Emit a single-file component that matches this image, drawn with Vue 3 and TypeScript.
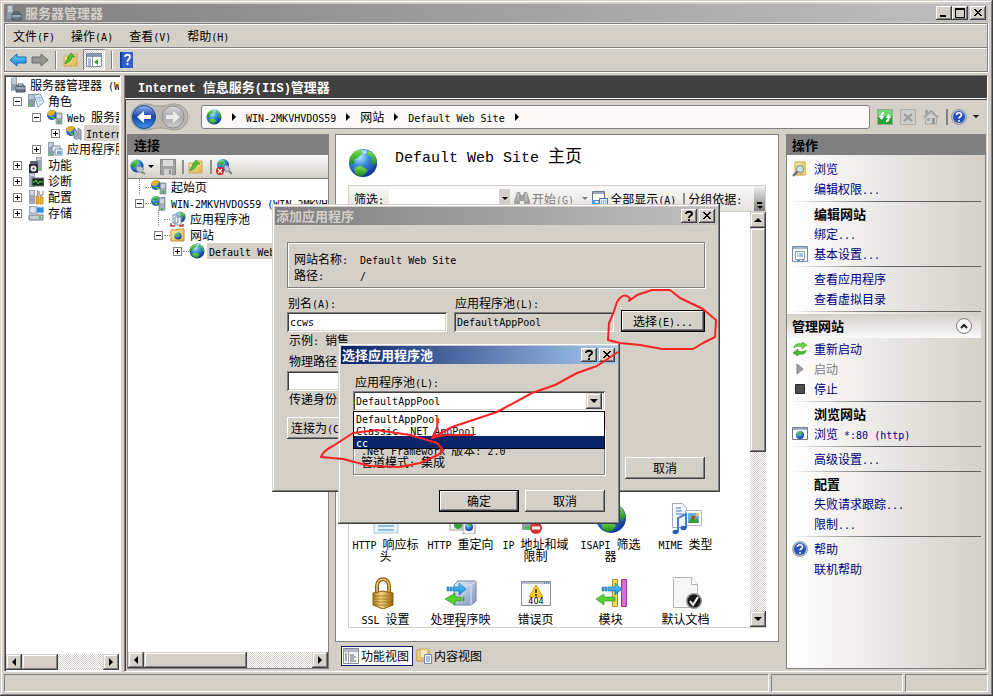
<script setup lang="ts">
import { h, ref } from 'vue'
import type { FunctionalComponent } from 'vue'

// Sets half-width runs in a mono face and leaves CJK runs in the page face.
const T: FunctionalComponent<{ s: string }> = (props) =>
  h('span', { class: 'tx' }, props.s.split(/([\x20-\x7e]+)/).filter(Boolean).map((part) =>
    /^[\x20-\x7e]/.test(part) ? h('span', { class: 'en' }, part) : part))
T.props = ['s']

const Ico: FunctionalComponent<{ n: string; size?: number }> = (props) =>
  h('svg', { class: 'ico', width: props.size ?? 16, height: props.size ?? 16, 'aria-hidden': 'true' },
    [h('use', { href: '#i-' + props.n })])
Ico.props = ['n', 'size']

interface Node { label: string; icon: string; depth: number; box?: string; on?: boolean }
const nav: Node[] = [
  { label: '服务器管理器 (W', icon: 'srvbox', depth: 0 },
  { label: '角色', icon: 'roles', depth: 1, box: '-' },
  { label: 'Web 服务器', icon: 'websrv', depth: 2, box: '-' },
  { label: 'Intern', icon: 'iis', depth: 3, box: '+', on: true },
  { label: '应用程序服', icon: 'appsrv', depth: 2, box: '+' },
  { label: '功能', icon: 'feature', depth: 1, box: '+' },
  { label: '诊断', icon: 'diag', depth: 1, box: '+' },
  { label: '配置', icon: 'conf', depth: 1, box: '+' },
  { label: '存储', icon: 'store', depth: 1, box: '+' },
]
const sites: Node[] = [
  { label: '起始页', icon: 'websrv', depth: 1, box: '.' },
  { label: 'WIN-2MKVHVDOS59 (WIN-2MKVHVDOS59', icon: 'iissrv', depth: 1, box: '-' },
  { label: '应用程序池', icon: 'pool', depth: 2, box: '.' },
  { label: '网站', icon: 'sitefolder', depth: 2, box: '-' },
  { label: 'Default Web Site', icon: 'globe', depth: 3, box: '+', on: true },
]
const features = [
  { icon: 'header', lines: ['HTTP 响应标', '头'] },
  { icon: 'redirect', lines: ['HTTP 重定向'] },
  { icon: 'iplimit', lines: ['IP 地址和域', '限制'] },
  { icon: 'globe', lines: ['ISAPI 筛选', '器'] },
  { icon: 'mime', lines: ['MIME 类型'] },
  { icon: 'lock', lines: ['SSL 设置'] },
  { icon: 'handler', lines: ['处理程序映', '射'] },
  { icon: 'err404', lines: ['错误页'] },
  { icon: 'module', lines: ['模块'] },
  { icon: 'defdoc', lines: ['默认文档'] },
]
interface Act { t: string; k: 'link' | 'head' | 'sep' | 'off' | 'section'; icon?: string }
const actions: Act[] = [
  { t: '浏览', k: 'link', icon: 'browse' },
  { t: '编辑权限...', k: 'link' },
  { t: '', k: 'sep' },
  { t: '编辑网站', k: 'head' },
  { t: '绑定...', k: 'link' },
  { t: '基本设置...', k: 'link', icon: 'settings' },
  { t: '', k: 'sep' },
  { t: '查看应用程序', k: 'link' },
  { t: '查看虚拟目录', k: 'link' },
  { t: '', k: 'sep' },
  { t: '管理网站', k: 'section' },
  { t: '重新启动', k: 'link', icon: 'restart' },
  { t: '启动', k: 'off', icon: 'play' },
  { t: '停止', k: 'link', icon: 'stop' },
  { t: '', k: 'sep' },
  { t: '浏览网站', k: 'head' },
  { t: '浏览 *:80 (http)', k: 'link', icon: 'webwin' },
  { t: '', k: 'sep' },
  { t: '高级设置...', k: 'link' },
  { t: '', k: 'sep' },
  { t: '配置', k: 'head' },
  { t: '失败请求跟踪...', k: 'link' },
  { t: '限制...', k: 'link' },
  { t: '', k: 'sep' },
  { t: '帮助', k: 'link', icon: 'help' },
  { t: '联机帮助', k: 'link' },
]
const menus = ['文件(F)', '操作(A)', '查看(V)', '帮助(H)']
const pools = ['DefaultAppPool', 'Classic .NET AppPool', 'cc']
const hovered = ref('cc')
const pool = ref('DefaultAppPool')
const alias = ref('ccws')
const path = ref('')
</script>

<template>
  <svg class="defs" width="0" height="0" aria-hidden="true">
    <defs>
      <radialGradient id="g-globe" cx=".38" cy=".28" r=".8">
        <stop offset="0" stop-color="#b8ecff" /><stop offset=".4" stop-color="#3c8fe0" /><stop offset="1" stop-color="#0a1f8c" />
      </radialGradient>
      <linearGradient id="g-land" x1="0" y1="0" x2="0" y2="1">
        <stop offset="0" stop-color="#7ee04a" /><stop offset="1" stop-color="#128a1e" />
      </linearGradient>
      <linearGradient id="g-blue" x1="0" y1="0" x2="0" y2="1">
        <stop offset="0" stop-color="#8fb4ec" /><stop offset=".5" stop-color="#1440a8" /><stop offset="1" stop-color="#3f9bf0" />
      </linearGradient>
      <linearGradient id="g-grey" x1="0" y1="0" x2="0" y2="1">
        <stop offset="0" stop-color="#d8d8d8" /><stop offset=".5" stop-color="#aaa" /><stop offset="1" stop-color="#ccc" />
      </linearGradient>
      <linearGradient id="g-arrow" x1="0" y1="0" x2="0" y2="1">
        <stop offset="0" stop-color="#6fd0f8" /><stop offset="1" stop-color="#0f86d8" />
      </linearGradient>
      <linearGradient id="g-gold" x1="0" y1="0" x2="1" y2="0">
        <stop offset="0" stop-color="#a87818" /><stop offset=".4" stop-color="#f4d888" /><stop offset="1" stop-color="#94620c" />
      </linearGradient>
      <linearGradient id="g-folder" x1="0" y1="0" x2="1" y2="1">
        <stop offset="0" stop-color="#fbeeb0" /><stop offset="1" stop-color="#dfb24a" />
      </linearGradient>
      <linearGradient id="g-cube" x1="0" y1="0" x2="1" y2="1">
        <stop offset="0" stop-color="#e8eef6" /><stop offset="1" stop-color="#7d98c0" />
      </linearGradient>
    </defs>
    <symbol id="i-globe" viewBox="0 0 32 32">
      <circle cx="16" cy="16" r="15" fill="url(#g-globe)" />
      <path d="M3 9C6 4 11 1 14 2l1 4-4 4-4 2-1 5-4 1C1 15 2 11 3 9z" fill="url(#g-land)" />
      <path d="M7 21l6-2 6 3 2 2-4 5-6 1-4-4z" fill="url(#g-land)" />
      <path d="M22 3c5 2 8 7 8.500 12l-3 4-3-4 1-5-5-3z" fill="url(#g-land)" />
      <path d="M14 2l6 0 1 3-4 2z" fill="#d8f6ff" opacity=".6" />
    </symbol>
    <symbol id="i-srvbox" viewBox="0 0 16 16">
      <path d="M1 1l6-1v13l-6 1z" fill="#90a0ae" /><path d="M2 2h4M2 4h4M2 6h4" stroke="#eef4fa" />
      <path d="M6 9h9v6H6z" fill="#6d7a86" stroke="#46525e" /><path d="M8 9V7h5v2" fill="none" stroke="#46525e" /><path d="M6 11h9" stroke="#cfd8df" />
    </symbol>
    <symbol id="i-roles" viewBox="0 0 16 16">
      <path d="M0 1h7v13H0z" fill="#8a98a8" /><path d="M1 3h5M1 5h5" stroke="#eef" /><path d="M2 12h2" stroke="#3fd040" stroke-width="2" />
      <path d="M6 2l6-1 4 8-6 5z" fill="#eaf3fc" stroke="#7a96b8" /><path d="M8 5l4-1M9 7l4-2M10 9l4-2" stroke="#8fb0d4" />
    </symbol>
    <symbol id="i-websrv" viewBox="0 0 16 16">
      <circle cx="5" cy="6" r="5" fill="url(#g-globe)" /><path d="M0 4l4-3 5 1-3 4-4 1z" fill="#e8b020" /><path d="M3 8l5 0-1 3z" fill="#4cc230" />
      <path d="M9 4h6v11H9z" fill="#9aa8b6" stroke="#64727e" stroke-width=".6" /><path d="M10 6h4M10 8h4" stroke="#fff" /><path d="M11 13h2" stroke="#20c030" stroke-width="2" />
    </symbol>
    <symbol id="i-iis" viewBox="0 0 16 16">
      <circle cx="5" cy="6" r="5" fill="url(#g-globe)" /><path d="M0 3l4-2 5 1-3 4-4 1z" fill="#e8b020" /><path d="M3 8h5l-2 3z" fill="#4cc230" />
      <path d="M8 4l3 2v9l-3-2zM12 3l3 2v10l-3-2z" fill="#a4b0ba" stroke="#68747e" stroke-width=".7" />
    </symbol>
    <symbol id="i-iissrv" viewBox="0 0 16 16">
      <circle cx="5" cy="6" r="5" fill="url(#g-globe)" /><path d="M1 4l3-3 4 1-3 4z" fill="url(#g-land)" /><path d="M3 8h4l-1 3z" fill="#4cc230" />
      <path d="M8 3l6-1v13l-6 1z" fill="#a2afba" stroke="#64727e" stroke-width=".6" /><path d="M9 5h4M9 7h4" stroke="#fff" /><path d="M10 14h2" stroke="#20c030" stroke-width="2" />
    </symbol>
    <symbol id="i-appsrv" viewBox="0 0 16 16">
      <path d="M1 1h6v14H1z" fill="#93a1af" /><path d="M2 3h4M2 5h4" stroke="#fff" /><path d="M2 13h2" stroke="#3fd040" stroke-width="2" />
      <path d="M5 5h8v6H5z" fill="#e4ebf2" stroke="#7286a0" /><path d="M8 8h7v6H8z" fill="#f8fbff" stroke="#6d88ac" /><path d="M10 10h4v3h-4z" fill="#6aa4e4" />
    </symbol>
    <symbol id="i-feature" viewBox="0 0 16 16">
      <path d="M8 0h6v14H8z" fill="#9ba7b4" /><path d="M9 2h4" stroke="#fff" /><path d="M11 12h2" stroke="#3fd040" stroke-width="2" />
      <path d="M2 4h8v4H2z" fill="#58647c" /><path d="M1 7h9v9H1z" fill="#2c2c34" /><circle cx="5.500" cy="11.500" r="3" fill="#e8e8f0" /><circle cx="5.500" cy="11.500" r="1" fill="#333" />
    </symbol>
    <symbol id="i-diag" viewBox="0 0 16 16">
      <path d="M1 0h6v14H1z" fill="#9ba7b4" /><path d="M2 2h4" stroke="#fff" /><path d="M4 5h12v8H4z" fill="#1c2a1c" stroke="#78808a" /><path d="M5 9h2l1-2 2 4 2-3 1 1h2" fill="none" stroke="#48e048" />
    </symbol>
    <symbol id="i-conf" viewBox="0 0 16 16">
      <path d="M1 1h6v14H1z" fill="#9ba7b4" /><path d="M2 3h4M2 5h4" stroke="#fff" /><path d="M8 7h3v8H8z" fill="#f0a818" stroke="#a86c08" stroke-width=".6" /><path d="M9.500 1v6" stroke="#888" />
      <path d="M12 8h3v7h-3z" fill="#f4b830" stroke="#a86c08" stroke-width=".6" /><path d="M11 2v3l2 2 2-2V2" fill="none" stroke="#98a0a8" stroke-width="1.500" />
    </symbol>
    <symbol id="i-store" viewBox="0 0 16 16">
      <path d="M1 1h9v8H1z" fill="#a4acb4" /><circle cx="5" cy="5" r="3" fill="#dfe4ea" /><path d="M8 2h8v6H8z" fill="#2f8fe0" stroke="#c8d4e0" />
      <path d="M1 10h14v5H1z" fill="#c4ccd4" stroke="#707a84" /><path d="M11 12.500h2" stroke="#20c030" stroke-width="2" />
    </symbol>
    <symbol id="i-pool" viewBox="0 0 16 16">
      <circle cx="10" cy="6" r="5.500" fill="url(#g-globe)" /><path d="M9 1l5 1 1 5-4-2z" fill="url(#g-land)" />
      <path d="M3 4h5v8H3zM5 6h6v8H5z" fill="#f4f8fc" stroke="#7c8ca0" /><path d="M1 12v3h4M9 15h4v-2" fill="none" stroke="#c83030" stroke-width="1.500" />
    </symbol>
    <symbol id="i-sitefolder" viewBox="0 0 16 16">
      <path d="M1 3h5l1-1h7v12H1z" fill="url(#g-folder)" stroke="#c09030" /><circle cx="8" cy="9" r="3.500" fill="url(#g-globe)" /><path d="M5 8l3-2 2 1-2 3z" fill="#48c030" />
    </symbol>
    <symbol id="i-folderup" viewBox="0 0 16 16">
      <path d="M1 4h6l1-2h6v12H1z" fill="url(#g-folder)" stroke="#d0a850" /><path d="M2 12c0-3 2-5 4-6H4l4-5 4 4H9c0 3-3 5-5 6z" fill="#50c030" stroke="#2c8c20" stroke-width=".6" />
    </symbol>
    <symbol id="i-larrow" viewBox="0 0 18 16"><path d="M1 8l7-6v3h9v6H8v3z" fill="url(#g-arrow)" stroke="#1468b4" /></symbol>
    <symbol id="i-rarrow" viewBox="0 0 18 16"><path d="M17 8l-7-6v3H1v6h9v3z" fill="#969696" stroke="#6a6a6a" /></symbol>
    <symbol id="i-panes" viewBox="0 0 16 16">
      <path d="M.5 1.500h15v13H.5z" fill="#fff" stroke="#7c8aa2" /><path d="M1 2h14v3H1z" fill="#8898b4" /><path d="M2 7h3M2 9h3M2 11h3M2 13h3" stroke="#5878b0" /><path d="M6.500 5v9" stroke="#8a98b0" /><path d="M12 7v6L8 10z" fill="#38a830" />
    </symbol>
    <symbol id="i-helpbook" viewBox="0 0 16 16">
      <path d="M1 0h13v16H1z" fill="#3060d0" /><path d="M1 0h2v16H1z" fill="#183c98" />
      <path d="M6 5c0-3 5-3 5 0 0 2-2.500 2-2.500 5M8.500 11v2" fill="none" stroke="#fff" stroke-width="1.800" />
    </symbol>
    <symbol id="i-help" viewBox="0 0 16 16">
      <circle cx="8" cy="8" r="7.500" fill="#b8bcc8" stroke="#70747e" stroke-width=".6" /><circle cx="8" cy="8" r="6" fill="#2452bc" />
      <path d="M5.500 6c0-3 5-3 5 0 0 1.800-2.500 1.700-2.500 3.500M8 11v1.800" fill="none" stroke="#fff" stroke-width="1.600" />
    </symbol>
    <symbol id="i-refresh" viewBox="0 0 16 16">
      <path d="M.5.500h15v15H.5z" fill="#20a830" stroke="#98a898" /><path d="M1 1h14v6H1z" fill="#6cd870" />
      <path d="M7 3C4 3 3.500 5 3.500 7H1.500l3 4 3-4h-2c0-1 .5-2 1.500-2z" fill="#fff" /><path d="M9 13c3 0 3.500-2 3.500-4h2l-3-4-3 4h2c0 1-.5 2-1.500 2z" fill="#fff" />
    </symbol>
    <symbol id="i-cancel" viewBox="0 0 16 16"><path d="M.5.500h15v15H.5z" fill="#cbcbc8" stroke="#aeaeaa" /><path d="M4 5l8 7M12 5l-8 7" stroke="#989896" stroke-width="2" /></symbol>
    <symbol id="i-home" viewBox="0 0 16 16">
      <path d="M2 1h3v4H2z" fill="#a4a4a0" /><path d="M0 8l8-7 8 7-1 1-7-6-7 6z" fill="#9c9c98" /><path d="M2.500 8L8 3.500 13.500 8v7h-11z" fill="#d0d0cc" stroke="#a8a8a4" /><path d="M9 9h3v6H9z" fill="#989894" /><path d="M4 9h3v3H4z" fill="#a8a8a4" />
    </symbol>
    <symbol id="i-connect" viewBox="0 0 16 16">
      <circle cx="7" cy="7" r="6.500" fill="url(#g-globe)" /><path d="M1 5l4-4 4 1-3 5-4 2z" fill="url(#g-land)" /><path d="M6 8l4-1 4 3-3 4-4-2z" fill="#b8c4cc" stroke="#788692" stroke-width=".7" /><path d="M12 13l3 2" stroke="#788692" stroke-width="2" />
    </symbol>
    <symbol id="i-disconnect" viewBox="0 0 16 16">
      <circle cx="7" cy="6" r="6" fill="url(#g-globe)" /><path d="M2 4l4-3 3 1-3 5z" fill="url(#g-land)" /><path d="M8 7l3-1 3 4-2 3-3-1z" fill="#b8c4cc" stroke="#788692" stroke-width=".7" /><path d="M13 12l3 3" stroke="#788692" stroke-width="2" />
      <circle cx="4" cy="12" r="4" fill="#d02020" /><path d="M2 10l4 4M6 10l-4 4" stroke="#fff" stroke-width="1.400" />
    </symbol>
    <symbol id="i-save" viewBox="0 0 16 16"><path d="M.5.500h15v15H.5z" fill="#a2a2a2" stroke="#8a8a8a" /><path d="M3 1h10v6H3z" fill="#dcdcda" /><path d="M4 10h8v6H4z" fill="#cfcfcd" /><path d="M9 11h2v4H9z" fill="#8c8c8c" /></symbol>
    <symbol id="i-find" viewBox="0 0 16 16"><path d="M3 1h3l1 3h2l1-3h3l3 9v5h-6v-5H6v5H0v-5z" fill="#a0a0a0" /><path d="M4 2v8M12 2v8" stroke="#d0d0d0" /></symbol>
    <symbol id="i-showall" viewBox="0 0 16 16"><path d="M.5.500h12v9H.5z" fill="#fff" stroke="#68788c" /><path d="M1 1h11v2H1z" fill="#98a8c0" /><path d="M7.500 7.500h8v8h-8z" fill="#e4eefa" stroke="#4878c0" /><path d="M9 10h5M9 12h5" stroke="#4878c0" stroke-dasharray="1 1" /><path d="M0 9h3v3h3v-2l3 3-3 3v-1H0z" fill="#38a0e8" /></symbol>
    <symbol id="i-browse" viewBox="0 0 16 16"><path d="M3 1h10v13H3z" fill="url(#g-folder)" stroke="#c69c38" /><path d="M11 2h3v12h-3z" fill="#ecc860" /><circle cx="8" cy="8" r="3.500" fill="#c4e4fa" stroke="#7890a8" /><path d="M5.500 10.500L1 15" stroke="#586878" stroke-width="2" /></symbol>
    <symbol id="i-settings" viewBox="0 0 16 16"><path d="M.5.500h15v15H.5z" fill="#f4f7fa" stroke="#7888a0" /><path d="M1 1h14v2H1z" fill="#a8b6c8" /><path d="M3.500 5.500h9v8h-9z" fill="#fff" stroke="#8898ac" /><path d="M5 8h1M7 8h4M5 10h1M7 10h4" stroke="#4080c0" /><path d="M5 14.500h3M10 14.500h2" stroke="#28b8f0" /></symbol>
    <symbol id="i-restart" viewBox="0 0 16 16">
      <path d="M2 7c0-4 4-5 8-4V1l5 3-5 4V6C7 5 4 5 2 7z" fill="#6cd048" stroke="#38a028" stroke-width=".6" />
      <path d="M14 9c0 4-4 5-8 4v2l-5-3 5-4v2c3 1 6 1 8-1z" fill="#48b830" stroke="#2c8c20" stroke-width=".6" />
    </symbol>
    <symbol id="i-play" viewBox="0 0 16 16"><path d="M5 3l6 5-6 5z" fill="#a0a0a0" stroke="#848484" /></symbol>
    <symbol id="i-stop" viewBox="0 0 16 16"><path d="M3.500 3.500h9v9h-9z" fill="#4c4c4c" stroke="#282828" /></symbol>
    <symbol id="i-webwin" viewBox="0 0 16 16"><path d="M.5 1.500h15v12H.5z" fill="#fff" stroke="#6c7c90" /><path d="M1 2h14v2H1z" fill="#a4b2c4" /><circle cx="8" cy="9" r="4" fill="url(#g-globe)" /><path d="M5 8l3-3 2 1-2 4z" fill="#48c030" /></symbol>
    <symbol id="i-header" viewBox="0 0 32 32"><path d="M4 2h24v29H4z" fill="#eaf4fc" stroke="#a8c4dc" /><path d="M8 20h16M8 24h16M8 28h16" stroke="#2f88d0" /></symbol>
    <symbol id="i-redirect" viewBox="0 0 32 32"><path d="M5 6h12v22H5zM18 8h12v24H18z" fill="#f6f8fa" stroke="#989898" /><circle cx="13" cy="23" r="4" fill="#38a048" /><circle cx="24" cy="25" r="4" fill="url(#g-globe)" /><path d="M22 23l3-2 1 4z" fill="#48c030" /></symbol>
    <symbol id="i-iplimit" viewBox="0 0 32 32"><path d="M2 8h12v20H2z" fill="#909ca8" /><path d="M5 26h5" stroke="#40c848" stroke-width="3" /><circle cx="16" cy="26" r="6" fill="#d83030" /><path d="M12 26h8" stroke="#fff" stroke-width="3" /></symbol>
    <symbol id="i-mime" viewBox="0 0 32 32">
      <path d="M2.500 1.500h10l4 5v19h-14z" fill="#f4f8fc" stroke="#a4aab0" /><path d="M6 6h5M6 9h6M6 12h8" stroke="#3c74d0" /><path d="M15.500 8.500h16v15h-16z" fill="#fff" stroke="#b0b8c0" /><path d="M18 11h11v10H18z" fill="#68b4ec" /><path d="M18 21l4-7 3 4 2-2 2 5z" fill="#3c9c30" /><path d="M22 13l4 2-3 3z" fill="#e02818" /><circle cx="27.500" cy="12.500" r="1.500" fill="#f8d030" />
      <path d="M8 30V16l8-4v14" fill="none" stroke="#3c80d0" stroke-width="2" /><ellipse cx="5.500" cy="30" rx="3" ry="2.200" fill="#2860b0" /><ellipse cx="13.500" cy="26" rx="3" ry="2.200" fill="#2860b0" />
    </symbol>
    <symbol id="i-lock" viewBox="0 0 32 32">
      <path d="M7 17V9c0-9 12-9 12 0v8" fill="none" stroke="#906010" stroke-width="4" /><path d="M7 17V9c0-9 12-9 12 0v8" fill="none" stroke="#e8cc80" stroke-width="1.500" /><path d="M3 16l10-2 10 2v12l-10 4-10-4z" fill="url(#g-gold)" stroke="#8c5c08" /><path d="M3 19h20M3 22h20M3 25h20M4 28h18" stroke="#9c6c14" stroke-width=".8" />
    </symbol>
    <symbol id="i-handler" viewBox="0 0 32 32">
      <path d="M9 8l4-4h18v20l-5 4H9z" fill="url(#g-cube)" stroke="#6c84a8" /><path d="M10 8h16v20M26 8l5-4" fill="none" stroke="#d8e4f4" />
      <path d="M2 10h2v4H2zM5 10h2v4H5zM8 10h6V6l7 6-7 6v-4H8z" fill="url(#g-arrow)" stroke="#0c64ac" stroke-width=".6" /><path d="M19 20h-1v4h1zM16 20h-6v-4l-10 6 10 6v-4h6z" fill="#58d030" stroke="#288818" stroke-width=".6" />
    </symbol>
    <symbol id="i-err404" viewBox="0 0 32 32">
      <path d="M1.500 4.500h29v24h-29z" fill="#fafafa" stroke="#8c8c90" /><path d="M2 5h28v2H2z" fill="#b4bccc" /><path d="M24 6h1M26 6h1M28 6h1" stroke="#3c5c9c" /><path d="M16 8l7 12H9z" fill="#fcd420" stroke="#c89810" /><path d="M16 12v4M16 17v2" stroke="#222" stroke-width="1.600" />
      <text x="16" y="27" text-anchor="middle" font-family="DejaVu Sans" font-size="8">404</text>
    </symbol>
    <symbol id="i-module" viewBox="0 0 32 32">
      <path d="M17.500 2.500h5v27h-5z" fill="#f0dc58" stroke="#b09010" /><path d="M26.500 2.500h5v27h-5z" fill="#d870d4" stroke="#a030a0" />
      <path d="M7 10h2v4H7zM10 10h2v4h-2zM13 10h7V6l7 6-7 6v-4h-7z" fill="url(#g-arrow)" stroke="#0c64ac" stroke-width=".6" /><path d="M20 20H9v-3L1 22l8 6v-4h11z" fill="#58d030" stroke="#288818" stroke-width=".6" />
    </symbol>
    <symbol id="i-defdoc" viewBox="0 0 32 32">
      <path d="M3.500.500h18l6 7v23h-24z" fill="#f6f6f6" stroke="#b4b4b4" /><path d="M21.500.500v7h6" fill="#fff" stroke="#b4b4b4" /><circle cx="24" cy="24" r="8" fill="#909090" /><circle cx="24" cy="24" r="6.500" fill="#181818" /><path d="M20 24l3 4 5-8" fill="none" stroke="#fff" stroke-width="2" />
    </symbol>
    <symbol id="i-content" viewBox="0 0 16 16"><path d="M1 2h5l1 1h6v10H1z" fill="url(#g-folder)" stroke="#c09838" /><path d="M4 1h8v9H4z" fill="#f6e8b8" stroke="#c8a850" /><path d="M8.500 6.500h7v9h-7z" fill="#fff" stroke="#6c88b0" /><path d="M10 9h4M10 11h4M10 13h4" stroke="#4080c8" /></symbol>
    <symbol id="i-featview" viewBox="0 0 16 16"><path d="M.5.500h15v15H.5z" fill="#f4f4f4" stroke="#888c98" /><path d="M1 1h14v3H1z" fill="#b4b8c4" /><path d="M2 6h2M2 8h2M2 10h2M2 12h2M7 7h4M7 9h6M7 11h4M7 13h6" stroke="#606874" /><path d="M5.500 4v11" stroke="#a0a4b0" /></symbol>
    <symbol id="i-x" viewBox="0 0 12 12"><path d="M2 2l7 7M3 2l7 7M9 2L2 9M10 2L3 9" stroke="#000" /></symbol>
    <symbol id="i-q" viewBox="0 0 12 12"><path d="M3 4c0-3 6-3 6 0 0 2-3 1-3 4M6 9v2" fill="none" stroke="#000" stroke-width="1.800" /></symbol>
    <symbol id="i-min" viewBox="0 0 12 12"><path d="M2 8h6v2H2z" /></symbol>
    <symbol id="i-max" viewBox="0 0 12 12"><path d="M1.500 1.500h9v9h-9z" fill="none" stroke="#000" /><path d="M1 1h10v2H1z" /></symbol>
  </svg>

  <main class="window">
    <header class="title">
      <Ico n="srvbox" /><h1 class="bold"><T s="服务器管理器" /></h1>
      <button class="cap" aria-label="最小化"><Ico n="min" :size="12" /></button>
      <button class="cap" aria-label="最大化"><Ico n="max" :size="12" /></button>
      <button class="cap last" aria-label="关闭"><Ico n="x" :size="12" /></button>
    </header>

    <div class="bars">
      <nav class="menu"><button v-for="m in menus" :key="m" class="plain"><T :s="m" /></button></nav>
      <div class="tools">
        <button class="plain" aria-label="后退"><Ico n="larrow" :size="18" /></button>
        <button class="plain" aria-label="前进"><Ico n="rarrow" :size="18" /></button>
        <i class="vsep"></i>
        <button class="plain" aria-label="向上"><Ico n="folderup" /></button>
        <button class="plain pressed" aria-label="显示树"><Ico n="panes" /></button>
        <i class="vsep"></i>
        <button class="plain" aria-label="帮助"><Ico n="helpbook" /></button>
      </div>
    </div>

    <div class="body">
      <aside class="navpane">
        <ul class="tree">
          <li v-for="n in nav" :key="n.label" :class="'d' + n.depth">
            <i v-if="n.box" class="box" :class="{ plus: n.box === '+' }"></i>
            <Ico :n="n.icon" /><span class="lab" :class="{ on: n.on }"><T :s="n.label" /></span>
          </li>
        </ul>
        <div class="hbar"><button class="sb" aria-label="左"><i class="tri l"></i></button><i class="thumb t1"></i><span class="grow"></span><button class="sb" aria-label="右"><i class="tri r"></i></button></div>
      </aside>

      <section class="iis">
        <h2 class="iishead bold"><T s="Internet 信息服务(IIS)管理器" /></h2>
        <div class="addrrow">
          <svg class="orbs" width="62" height="28" viewBox="0 0 62 28" aria-hidden="true">
            <path d="M14 1c7 0 9 2 16 2s9-2 15-2a13 13 0 0 1 0 26c-6 0-8-2-15-2s-9 2-16 2A13 13 0 0 1 14 1z" fill="#bbb8b2" stroke="#a29f99" />
            <circle cx="14" cy="14" r="11.500" fill="url(#g-blue)" stroke="#24468c" /><path d="M7 14l7-6v4h7v4h-7v4z" fill="#fff" />
            <circle cx="43" cy="14" r="11" fill="url(#g-grey)" stroke="#909090" /><path d="M50 14l-7-6v4h-7v4h7v4z" fill="#ececec" />
          </svg>
          <div class="addr">
            <Ico n="globe" />
            <i class="tri r"></i><T s="WIN-2MKVHVDOS59" /><i class="tri r"></i><T s="网站" /><i class="tri r"></i><T s="Default Web Site" /><i class="tri r"></i>
          </div>
          <div class="addrtools">
            <button class="plain" aria-label="刷新"><Ico n="refresh" /></button>
            <button class="plain" aria-label="停止加载" disabled><Ico n="cancel" /></button>
            <button class="plain" aria-label="主页" disabled><Ico n="home" /></button>
            <button class="plain helpbtn" aria-label="帮助"><Ico n="help" /><i class="tri d"></i></button>
          </div>
        </div>

        <div class="cols">
          <section class="conn">
            <h3 class="panehead bold"><T s="连接" /></h3>
            <div class="conntools">
              <button class="plain" aria-label="连接"><Ico n="connect" /><i class="tri d"></i></button>
              <button class="plain" aria-label="保存" disabled><Ico n="save" /></button><i class="bar"></i>
              <button class="plain" aria-label="上移"><Ico n="folderup" /></button><i class="bar"></i>
              <button class="plain" aria-label="断开"><Ico n="disconnect" /></button>
            </div>
            <ul class="tree sites">
              <li v-for="n in sites" :key="n.label" :class="'d' + n.depth">
                <i class="box" :class="{ plus: n.box === '+', dots: n.box === '.' }"></i><i class="lead"></i>
                <Ico :n="n.icon" /><span class="lab" :class="{ on: n.on }"><T :s="n.label" /></span>
              </li>
            </ul>
            <div class="hbar"><button class="sb" aria-label="左"><i class="tri l"></i></button><i class="thumb t2"></i><span class="grow"></span><button class="sb" aria-label="右"><i class="tri r"></i></button></div>
          </section>

          <section class="center">
            <div class="home">
              <div class="homehead"><Ico n="globe" :size="30" /><h3><T s="Default Web Site 主页" /></h3></div>
              <div class="filter">
                <label for="flt"><T s="筛选:" /></label><input id="flt" type="text"><i class="drop"><i class="tri d"></i></i>
                <button class="plain off" disabled><Ico n="find" /><T s="开始(G)" /><i class="tri d grey"></i></button>
                <button class="plain"><Ico n="showall" /><T s="全部显示(A)" /></button>
                <i class="bar"></i><T s="分组依据:" /><i class="more"><i class="dash"></i><i class="tri d"></i></i>
              </div>
              <div class="list">
                <div class="grid">
                  <div v-for="f in features" :key="f.icon + f.lines[0]" class="feat">
                    <Ico :n="f.icon" :size="32" />
                    <span v-for="l in f.lines" :key="l" class="line"><T :s="l" /></span>
                  </div>
                </div>
                <div class="vbar"><button class="sb" aria-label="上"><i class="tri u"></i></button><i class="vthumb"></i><span class="grow"></span><button class="sb" aria-label="下"><i class="tri d"></i></button></div>
              </div>
            </div>
            <div class="views">
              <button class="plain cur"><Ico n="featview" /><T s="功能视图" /></button>
              <button class="plain"><Ico n="content" /><T s="内容视图" /></button>
            </div>
          </section>

          <aside class="acts">
            <h3 class="panehead bold"><T s="操作" /></h3>
            <div class="actbody">
              <template v-for="(a, i) in actions" :key="i">
                <hr v-if="a.k === 'sep'">
                <div v-else-if="a.k === 'section'" class="section bold"><T :s="a.t" />
                  <button class="round" aria-label="折叠"><svg width="8" height="6" viewBox="0 0 8 6"><path d="M1 5l3-3 3 3" fill="none" stroke="#222" stroke-width="2" /></svg></button>
                </div>
                <div v-else class="act">
                  <span class="slot"><Ico v-if="a.icon" :n="a.icon" /></span>
                  <a v-if="a.k === 'link'" href="#"><T :s="a.t" /></a>
                  <b v-else-if="a.k === 'head'" class="bold"><T :s="a.t" /></b>
                  <span v-else class="off"><T :s="a.t" /></span>
                </div>
              </template>
            </div>
          </aside>
        </div>
      </section>
    </div>

    <footer class="status"><span class="s1"></span><span class="s2"></span><span class="s3"></span></footer>

    <section class="dialog d-add" role="dialog" aria-labelledby="t-add">
      <header class="dtitle grey">
        <h2 id="t-add" class="bold"><T s="添加应用程序" /></h2>
        <button class="cap" aria-label="说明"><Ico n="q" :size="12" /></button><button class="cap last" aria-label="关闭"><Ico n="x" :size="12" /></button>
      </header>
      <div class="addbody">
        <dl class="group info"><dt><T s="网站名称:" /></dt><dd><T s="Default Web Site" /></dd><dt><T s="路径:" /></dt><dd><T s="/" /></dd></dl>
        <div class="fields">
          <div><label for="alias"><T s="别名(A):" /></label><input id="alias" v-model="alias" class="sunk" type="text"></div>
          <div><label for="apool"><T s="应用程序池(L):" /></label><input id="apool" class="sunk ro" type="text" readonly :value="pool"></div>
          <button class="btn def"><T s="选择(E)..." /></button>
        </div>
        <p class="hint"><T s="示例: 销售" /></p>
        <label class="plabel" for="path"><T s="物理路径" /></label>
        <input id="path" v-model="path" class="sunk pinput" type="text">
        <p class="pass"><T s="传递身份验" /></p>
        <div class="row"><button class="btn conas"><T s="连接为(C)..." /></button></div>
        <div class="row end"><button class="btn"><T s="取消" /></button></div>
      </div>
    </section>

    <section class="dialog d-pick" role="dialog" aria-labelledby="t-pick">
      <header class="dtitle blue">
        <h2 id="t-pick" class="bold"><T s="选择应用程序池" /></h2>
        <button class="cap" aria-label="说明"><Ico n="q" :size="12" /></button><button class="cap last" aria-label="关闭"><Ico n="x" :size="12" /></button>
      </header>
      <div class="pickbody">
        <label for="pool"><T s="应用程序池(L):" /></label>
        <div class="combo">
          <select id="pool" v-model="pool" class="sunk"><option v-for="p in pools" :key="p">{{ p }}</option></select>
          <i class="sb"><i class="tri d"></i></i>
          <ul class="options" role="listbox">
            <li v-for="p in pools" :key="p" role="option" :class="{ hot: p === hovered }" @mouseenter="hovered = p"><T :s="p" /></li>
          </ul>
        </div>
        <div class="group props"><p><T s=".Net Framework 版本: 2.0" /></p><p><T s="管道模式: 集成" /></p></div>
        <div class="row end"><button class="btn def"><T s="确定" /></button><button class="btn"><T s="取消" /></button></div>
      </div>
    </section>

    <svg class="marks" width="420" height="200" viewBox="310 280 420 200" aria-hidden="true">
      <path d="M629 301L630 298 627 296Q622 294 617 302L613 314 609 323 608 340 620 343 640 345 662 349H693L703 343 715 337 716 320 703 309 680 298 670 290H652L637 295 629 301" />
      <path d="M618 352L597 366 577 373 555 385 532 393 497 412 467 422 452 427 432 438 437 428 438 419M432 438L445 435H473" />
      <path d="M321 457Q324 450 333 446L353 433 377 430 410 435 437 443 443 450 438 455 420 463 400 467 370 466 343 459Z" />
    </svg>
  </main>
</template>

<style>
body { background: #d4d0c8; }
.en { font-family: "DejaVu Sans Mono", "Liberation Mono", monospace; font-size: 10px; line-height: 1; white-space: pre; }
.bold .en { font-family: "Liberation Mono", monospace; font-size: 12px; }
.homehead .en { font-family: "Liberation Mono", monospace; font-size: 15px; }
.tx { white-space: nowrap; }
.ico { display: block; flex: none; }
</style>

<style scoped>
* { box-sizing: border-box; }
h1, h2, h3, p, ul, dl, dd { margin: 0; padding: 0; font-weight: normal; font-size: 12px; }
ul { list-style: none; }
i { font-style: normal; flex: none; }
.defs { position: absolute; }
.window {
  position: relative; display: flex; flex-direction: column; min-height: 100vh; padding: 4px 5px 4px 4px;
  background: #d4d0c8; color: #000; font: 12px/16px "Noto Sans CJK SC", sans-serif; overflow: hidden;
  box-shadow: inset -1px -1px #404040, inset 1px 1px #d4d0c8, inset -2px -2px #808080, inset 2px 2px #fff;
}
button, input, select { font: inherit; color: inherit; margin: 0; }
.bold { font-size: 13px; font-weight: bold; }
.grow { flex: 1; }
.plain { display: flex; align-items: center; border: 0; padding: 0; background: none; }
.title, .dtitle { display: flex; align-items: center; height: 18px; color: #d4d0c8; background: linear-gradient(90deg, #808080, #c0c0c0); }
.title { padding: 0 2px; gap: 2px; }
.title h1, .dtitle h2 { flex: 1; padding-left: 1px; font-size: 13px; font-weight: bold; }
.cap {
  display: grid; place-items: center; width: 16px; height: 14px; padding: 0; border: 0; color: #000; background: #d4d0c8;
  box-shadow: inset -1px -1px #404040, inset 1px 1px #fff, inset -2px -2px #808080;
}
.title .cap + .cap:not(.last) { margin-left: -2px; }
.bars { margin-top: 1px; border: 1px solid #808080; box-shadow: inset 1px 1px #fff, 0 1px #fff, 1px 0 #fff; }
.menu { display: flex; gap: 16px; height: 24px; padding-left: 8px; border-bottom: 1px solid #808080; }
.tools { display: flex; align-items: center; height: 23px; padding-left: 4px; gap: 4px; box-shadow: inset 0 1px #fff; }
.vsep { width: 2px; height: 18px; margin: 0 2px; background: #808080; border-right: 1px solid #fff; }
.pressed { width: 22px; height: 21px; justify-content: center; background: repeating-conic-gradient(#fff 0 25%, #d4d0c8 0 50%) 0 0 / 2px 2px; box-shadow: inset 1px 1px #808080, inset -1px -1px #fff; }
.body { display: flex; flex: 1; gap: 3px; margin-top: 3px; }
.navpane {
  display: flex; flex-direction: column; width: 117px; flex: none; background: #fff; overflow: hidden;
  border: 1px solid; border-color: #808080 #fff #fff #808080; box-shadow: inset 1px 1px #404040; padding: 1px;
}
.tree { flex: 1; overflow: hidden; }
.tree li { display: flex; align-items: center; height: 16px; }
.lab { padding: 0 2px; margin-left: 2px; line-height: 16px; white-space: nowrap; }
.on { background: #d4d0c8; }
.d0 { padding-left: 4px; }
.d1 { padding-left: 7px; }
.d2 { padding-left: 26px; }
.d3 { padding-left: 45px; }
.box { position: relative; width: 9px; height: 9px; margin-right: 6px; border: 1px solid #808080; background: linear-gradient(#000, #000) 1px 3px / 5px 1px no-repeat; }
.box.plus { background: linear-gradient(#000, #000) 1px 3px / 5px 1px no-repeat, linear-gradient(#000, #000) 3px 1px / 1px 5px no-repeat; }
.box.dots { border-color: transparent; border-left: 1px dotted #808080; margin-left: 4px; margin-right: 2px; background: none; }
.sites .box { margin-right: 1px; }
.sites .box.dots { width: 5px; height: 16px; }
.lead { width: 6px; border-top: 1px dotted #808080; }
.hbar { display: flex; height: 16px; background: repeating-conic-gradient(#fff 0 25%, #d4d0c8 0 50%) 0 0 / 2px 2px; }
.sb, .thumb, .vthumb { display: grid; place-items: center; width: 16px; height: 16px; border: 0; padding: 0; background: #d4d0c8; box-shadow: inset -1px -1px #404040, inset 1px 1px #d4d0c8, inset -2px -2px #808080, inset 2px 2px #fff; }
.t1 { width: 36px; }
.t2 { width: 103px; }
.vthumb { height: 224px; }
.tri { width: 0; height: 0; border: 4px solid transparent; }
.tri.r { border-left-color: #000; border-right: 0; }
.tri.l { border-right-color: #000; border-left: 0; }
.tri.u { border-bottom-color: #000; border-top: 0; }
.tri.d { border-top-color: #000; border-bottom: 0; }
.iis { flex: 1; display: flex; flex-direction: column; min-width: 0; border: 1px solid; border-color: #808080 #fff #fff #808080; box-shadow: inset 1px 0 #404040; }
.iishead { height: 22px; padding-left: 13px; font-size: 13px; font-weight: bold; line-height: 22px; color: #fff; background: #404040; }
.addrrow { display: flex; align-items: center; height: 36px; padding: 0 6px 0 5px; border-top: 1px solid #fff; box-shadow: inset 0 1px #404040; }
.orbs { flex: none; margin-right: 9px; }
.addr { display: flex; flex: 1; align-items: center; gap: 10px; height: 24px; padding-left: 4px; border: 1px solid #808080; border-radius: 3px; background: #faf9f7; }
.addrtools { display: flex; gap: 7px; padding-left: 7px; }
.addrtools .tri, .conntools .tri { border-width: 3px 3px 0; }
.helpbtn { gap: 6px; border-left: 2px solid #808080; padding-left: 3px; margin-right: 2px; }
.cols { display: flex; flex: 1; padding: 0 1px 2px 2px; }
.panehead { height: 21px; padding-left: 6px; font-size: 13px; font-weight: bold; line-height: 21px; background: #808080; }
.conn { display: flex; flex-direction: column; width: 202px; flex: none; margin-right: 6px; border: 1px solid #808080; border-top: 0; background: #fff; }
.conntools { display: flex; align-items: center; gap: 6px; height: 24px; padding-left: 2px; border-bottom: 1px solid #808080; background: linear-gradient(#fafaf9, #d4d0c8); }
.conntools .plain { gap: 2px; }
.bar { width: 2px; height: 14px; background: #909090; }
.conntools .bar { margin-right: -2px; }
.center { display: flex; flex-direction: column; flex: 1; min-width: 0; margin-right: 7px; }
.home { display: flex; flex-direction: column; flex: 1; padding: 0 12px 13px; border: 1px solid #808080; background: #fff; }
.homehead { display: flex; align-items: center; gap: 17px; height: 50px; }
.homehead .ico { margin-top: 5px; }
.homehead h3 { font-size: 17px; line-height: 20px; margin-top: -10px; }
.filter { display: flex; align-items: center; height: 27px; padding-left: 5px; border: 1px solid #d4d0c8; background: linear-gradient(#f8f8f7, #e4e2dc); overflow: hidden; }
.filter input { width: 110px; height: 20px; margin-left: 5px; border: 0; background: #fff; padding: 0; }
.drop { display: grid; place-items: center; width: 11px; height: 20px; margin-right: 4px; background: #d4d0c8; }
.drop .tri, .more .tri, .filter .grey { border-width: 3px 3px 0; }
.filter .grey { border-top-color: #808080; margin: 0 4px 0 6px; }
.filter .plain { gap: 2px; }
.off { color: #808080; }
.filter .bar { margin: 0 3px 0 7px; height: 12px; }
.more { display: flex; flex-direction: column; align-items: center; justify-content: flex-end; gap: 2px; width: 11px; height: 25px; padding-bottom: 2px; margin-left: auto; background: linear-gradient(#f0f0ee, #808080); }
.dash { width: 5px; height: 2px; background: #000; }
.list { display: flex; flex: 1 1 0; min-height: 0; overflow: hidden; border: 1px solid #d4d0c8; border-top: 0; border-right: 0; }
.grid { display: grid; flex: 1; grid-template-columns: repeat(5, 75px); grid-auto-rows: 75px; margin-left: -1px; padding-top: 290px; }
.feat { display: flex; flex-direction: column; align-items: center; }
.feat .ico { margin-bottom: 4px; }
.line { line-height: 12px; height: 12px; }
.vbar { display: flex; flex-direction: column; width: 16px; background: repeating-conic-gradient(#fff 0 25%, #d4d0c8 0 50%) 0 0 / 2px 2px; }
.views { display: flex; align-items: center; height: 27px; padding-left: 6px; gap: 3px; }
.views .plain { height: 20px; gap: 2px; }
.views .cur { border: 1px solid #0a246a; background: #fff; padding: 0 3px 0 1px; }
.acts { display: flex; flex-direction: column; width: 200px; flex: none; }
.actbody { flex: 1; padding: 4px 4px 0 0; border: 1px solid #808080; border-top: 0; background: linear-gradient(90deg, #fff, #d4d0c8); }
.act { display: flex; align-items: center; height: 20px; padding-left: 5px; }
.slot { width: 22px; }
.act a { color: #00007c; text-decoration: none; }
hr { height: 5px; margin: 0 0 0 4px; border: 0; background: linear-gradient(90deg, transparent, #606060 50%) 0 2px / 100% 1px no-repeat; }
.section { display: flex; align-items: center; justify-content: space-between; height: 24px; margin-bottom: 1px; padding: 0 9px 0 5px; background: linear-gradient(#d4d0c8, #fafaf9); }
.round { display: grid; place-items: center; width: 16px; height: 16px; padding: 0; border: 1px solid #808080; border-radius: 50%; background: #f4f3f0; }
.status { display: flex; gap: 2px; height: 18px; margin-top: 2px; }
.status span { border: 1px solid; border-color: #808080 #fff #fff #808080; }
.s1 { flex: 1; }
.s2 { width: 132px; }
.s3 { width: 83px; }
.dialog { position: absolute; padding: 3px; background: #d4d0c8; box-shadow: inset -1px -1px #404040, inset 1px 1px #d4d0c8, inset -2px -2px #808080, inset 2px 2px #fff; }
.dtitle { padding-right: 2px; }
.dtitle .last { margin-left: 2px; }
.blue { color: #fff; background: linear-gradient(90deg, #0a246a, #a6caf0); }
.d-add { left: 272px; top: 204px; width: 448px; height: 288px; }
.d-pick { left: 338px; top: 343px; width: 282px; height: 181px; }
.addbody { display: flex; flex-direction: column; padding: 17px 12px 0; }
.group { border: 1px solid #808080; box-shadow: 1px 1px #fff, inset 1px 1px #fff; }
.info { display: grid; grid-template-columns: 66px 1fr; align-content: center; height: 46px; padding: 3px 0 0 6px; }
.fields { display: flex; align-items: flex-end; gap: 7px; height: 44px; }
.fields label { display: block; height: 17px; padding-left: 1px; }
.sunk { display: block; width: 160px; height: 20px; padding: 0 0 0 3px; border: 0; border-radius: 0; outline: 0; background: #fff; font: 10px "DejaVu Sans Mono", monospace; box-shadow: inset 1px 1px #808080, inset -1px -1px #fff, inset 2px 2px #404040, inset -2px -2px #d4d0c8; }
.ro { background: #d4d0c8; }
.btn { width: 80px; height: 22px; padding: 0; border: 0; background: #d4d0c8; box-shadow: inset -1px -1px #404040, inset 1px 1px #fff, inset -2px -2px #808080; }
.def { border: 1px solid #000; }
.fields .btn { width: 86px; margin-left: auto; }
.hint, .pass { padding-left: 2px; }
.plabel { margin-top: 5px; padding-left: 2px; }
.pinput { margin-top: 2px; }
.conas { margin-top: 10px; }
.row { display: flex; gap: 6px; }
.end { justify-content: flex-end; }
.addbody .end { margin-top: 18px; }
.pickbody { padding: 10px 12px 0; }
.pickbody label { display: block; height: 17px; padding-left: 2px; }
.combo { position: relative; }
.combo select { width: 252px; height: 20px; appearance: none; }
.combo .sb { position: absolute; right: 3px; top: 2px; }
.options { position: absolute; top: 20px; left: 0; width: 252px; border: 1px solid #000; background: #fff; }
.options li { height: 12px; padding-left: 2px; line-height: 12px; }
.hot { color: #fff; background: #0a246a; }
.props { width: 252px; height: 46px; margin: 18px 0 15px; padding: 14px 0 0 7px; }
.props p { height: 12px; line-height: 12px; }
.marks { position: absolute; left: 310px; top: 280px; pointer-events: none; }
.marks path { fill: none; stroke: #f22; stroke-width: 2; stroke-linejoin: round; stroke-linecap: round; }
</style>
